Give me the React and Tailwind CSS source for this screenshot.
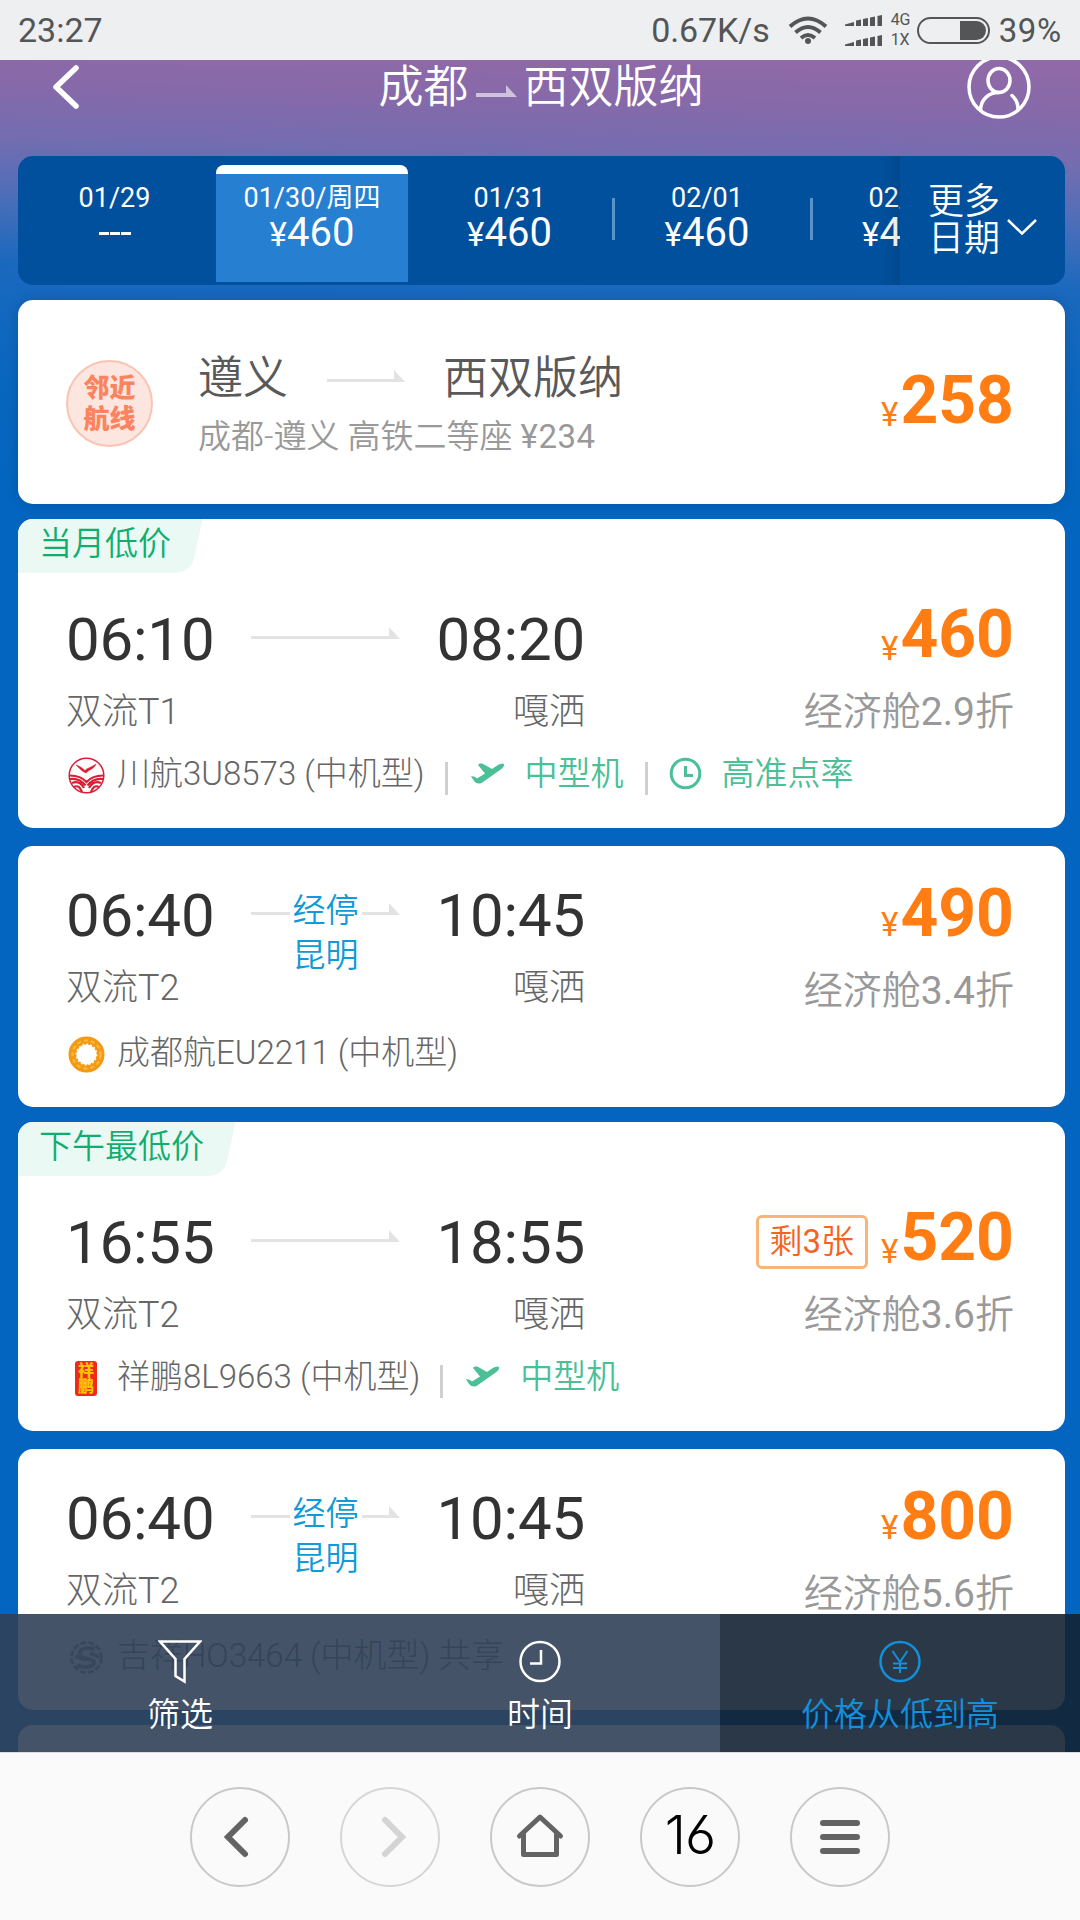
import React from 'react';

const dates = [
    { day: '01/29', price: null },
    { day: '01/30/周四', price: '460', active: true },
    { day: '01/31', price: '460', divider: true },
    { day: '02/01', price: '460', divider: true },
    { day: '02/02', price: '460' },
];

const flights = [
    {
        tag: '当月低价', tagWidth: 'w-[178px]', depart: '06:10', arrive: '08:20', from: '双流T1', to: '嘎洒',
        price: '460', discount: '2.9', logo: 'sichuan', airline: '川航3U8573 (中机型)', extras: ['plane', 'clock'],
    },
    {
        depart: '06:40', arrive: '10:45', from: '双流T2', to: '嘎洒', stop: '昆明',
        price: '490', discount: '3.4', logo: 'chengdu', airline: '成都航EU2211 (中机型)', extras: [],
    },
    {
        tag: '下午最低价', tagWidth: 'w-[211px]', depart: '16:55', arrive: '18:55', from: '双流T2', to: '嘎洒', left: 3,
        price: '520', discount: '3.6', logo: 'lucky', airline: '祥鹏8L9663 (中机型)', extras: ['plane'],
    },
    {
        depart: '06:40', arrive: '10:45', from: '双流T2', to: '嘎洒', stop: '昆明',
        price: '800', discount: '5.6', logo: 'juneyao', airline: '吉祥HO3464 (中机型) 共享', extras: [],
    },
];

const SignalBars = () => (
    <svg width="38" height="11" viewBox="0 0 38 11" fill="#545556">
        <path d="M0 11V9.500L9 7V11Z M11 11V5.500L16 4.500V11Z M18 11V4L23 3V11Z M25 11V2.500L30 1.500V11Z M32.500 11V1L37 0V11Z" />
    </svg>
);

const StatusBar = () => (
    <div className="flex h-[60px] shrink-0 items-center bg-[#edeff1] pl-[18px] pr-[18px] text-[34px] leading-none text-[#545556]">
        <span>23:27</span>
        <span className="ml-auto tracking-[-0.1px]">0.67K/s</span>
        <svg className="ml-[18px]" width="40" height="30" viewBox="0 0 40 30" fill="none" stroke="#545556" strokeWidth="4">
            <path d="M2 11.500Q20 -4.500 38 11.500M7.500 17.500Q20 6.500 32.500 17.500M13 23Q20 17 27 23" />
            <circle cx="20" cy="26" r="3" fill="#545556" stroke="none" />
        </svg>
        <div className="ml-[17px] flex flex-col gap-[9px]">
            <SignalBars />
            <SignalBars />
        </div>
        <div className="ml-[8px] flex w-[23px] flex-col gap-[4px] text-[16px] leading-[16px]">
            <span>4G</span>
            <span>1X</span>
        </div>
        <div className="ml-[3px] flex h-[27px] w-[73px] justify-end rounded-full border-2 border-[#545556] p-[2px]">
            <div className="w-[26px] rounded-r-full bg-[#545556]" />
        </div>
        <span className="ml-[9px] text-[33px] tracking-[0.7px]">39%</span>
    </div>
);

const Header = () => (
    <div className="flex h-[96px] shrink-0 items-start justify-between pl-[50px] pr-[48px]">
        <svg className="mt-[4px] w-[66px]" width="66" height="48" viewBox="0 0 66 48" fill="none" stroke="#fff" strokeWidth="5.500" strokeLinecap="round" strokeLinejoin="round">
            <path d="M26 4L6 23L26 42" />
        </svg>
        <div className="flex items-center pt-px text-[45px] font-[350] leading-[54px] text-white">
            <span>成都</span>
            <svg className="mx-[6px] mt-[3px]" width="43" height="14" viewBox="0 0 43 14" fill="#fff" fillOpacity="0.6">
                <path d="M1 10H31V2L42 14H1Z" />
            </svg>
            <span>西双版纳</span>
        </div>
        <svg className="-mt-[6px]" width="66" height="66" viewBox="0 0 66 66" fill="none" stroke="#fff" strokeWidth="3.500" strokeLinecap="round">
            <circle cx="33" cy="33" r="30" />
            <ellipse cx="33" cy="26.500" rx="11" ry="12" />
            <path d="M14.500 56C15 45 23 38.500 33 38.500M46 41.500C50 45 52 49.500 52 55" />
        </svg>
    </div>
);

const DateBar = () => (
    <div className="ml-[18px] mr-[15px] flex h-[129px] shrink-0 overflow-hidden rounded-[15px] bg-[#01509d] text-white">
        <div className="relative flex w-[882px] overflow-hidden pt-[9px]">
            {dates.map((item) => (
                <div key={item.day} className="flex w-[197.500px] shrink-0 items-start">
                    <div className={`flex h-[117px] w-[192px] shrink-0 flex-col items-center pl-px ${item.active ? 'rounded-t-[8px] border-t-[9px] border-white bg-[#267fd1]' : 'pt-[9px]'}`}>
                        <span className="mt-[9px] text-[27px] leading-[30px]">{item.day}</span>
                        {item.price ? (
                            <span className="mt-px flex items-baseline text-[40px] leading-[38px]">
                                <span className="text-[33px]">¥</span>
                                {item.price}
                            </span>
                        ) : (
                            <span className="mt-px flex h-[38px] items-center gap-px">
                                <i className="h-[3px] w-[10px] bg-white" />
                                <i className="h-[3px] w-[10px] bg-white" />
                                <i className="h-[3px] w-[10px] bg-white" />
                            </span>
                        )}
                    </div>
                    {item.divider && <div className="-mr-[8px] ml-[7px] mt-[33px] h-[42px] w-[3px] shrink-0 bg-[#5b93c9]" />}
                </div>
            ))}
            <div className="absolute inset-y-0 right-0 w-[20px] bg-gradient-to-r from-transparent to-black/10" />
        </div>
        <div className="flex items-center pl-[28px]">
            <div className="w-[72px] text-[36px] font-[350] leading-[37px]">更多日期</div>
            <svg className="ml-[6px] mt-[13px]" width="32" height="18" viewBox="0 0 32 18" fill="none" stroke="#fff" strokeWidth="2.500">
                <path d="M2 2L16 15.500L30 2" />
            </svg>
        </div>
    </div>
);

const Arrow = ({ width }) => (
    <svg width={width} height="12" viewBox={`0 0 ${width} 12`} fill="#e3e3e3">
        <path d={`M0 9H${width - 11}V0L${width} 12H0Z`} />
    </svg>
);

const Price = ({ value, low }) => (
    <div className="flex h-[66px] items-baseline leading-[66px] text-[#ff7d13]">
        <span className={`mr-[2px] text-[33px] ${low ? 'translate-y-[3px]' : ''}`}>¥</span>
        <span className="text-[66px] font-bold">{value}</span>
    </div>
);

const AirlineLogo = ({ name }) => {
    if (name === 'sichuan') {
        return (
            <svg width="37" height="37" viewBox="0 0 37 37" fill="none" stroke="#d81f35">
                <circle cx="18.500" cy="18.500" r="17.300" strokeWidth="1.500" />
                <path d="M8 8C12 9 14 11 17 13.500C19 11 24 10 28 7C26 12 22 12 18 16C15 15 12 12 8 8Z" fill="#d81f35" strokeWidth="0.500" />
                <path d="M2 18.500C9 18.500 14 20 18.500 25C23 20 28 18.500 35 18.500M2 22C9 21 14 24 17.500 28.500M35 22C28 21 23 24 19.500 28.500M4 26C9 24 13 26 16 31M33 26C28 24 24 26 21 31M6 30C10 28 12 30 14 35M31 30C27 28 25 30 23 35" strokeWidth="2.200" />
            </svg>
        );
    }
    if (name === 'chengdu') {
        return (
            <svg width="37" height="37" viewBox="0 0 37 37" fill="none">
                <circle cx="18.500" cy="18.500" r="14" stroke="#f39a12" strokeWidth="8" />
                <circle cx="18.500" cy="18.500" r="14" stroke="#f8b94c" strokeWidth="2" strokeDasharray="4 3" />
                <circle cx="18.500" cy="18.500" r="10.300" stroke="#fff" strokeWidth="1.200" strokeDasharray="2 2" />
            </svg>
        );
    }
    if (name === 'lucky') {
        return (
            <div className="flex h-[35px] w-[22px] flex-col items-center justify-center rounded-[3px] bg-[#ee2a1c] text-[16px] font-black leading-[16px] text-[#ffc400]">
                <span>祥</span>
                <span>鹏</span>
            </div>
        );
    }
    return (
        <svg width="37" height="37" viewBox="0 0 37 37" fill="none" stroke="#888" strokeWidth="4">
            <circle cx="18.500" cy="18.500" r="15" strokeWidth="3" strokeDasharray="6 2" />
            <path d="M27 10C17 7 10 11 12 16S27 19 26 24S14 29 9 26M7 17L17 21M22 14L31 18" />
        </svg>
    );
};

const Extra = ({ type }) => (
    <>
        <div className="mt-[8px] h-[33px] w-[3px] bg-[#cfcfcf]" />
        {type === 'plane' ? (
            <svg className="-mt-px ml-[23px] mr-[21px]" width="33" height="21" viewBox="0 0 33 21" fill="#4bbf95">
                <path d="M0 13.500C2 13 4 14 6 15.500L14 10.500C12 8 9 4.500 7 2C9 -0.500 12 0.500 14 2L21 6C25 3.500 28 0.500 32 0.500C34.500 2 32 5 29 7L12 19C9 21.500 5 20.500 3.500 18.500Z" />
            </svg>
        ) : (
            <svg className="-mt-px ml-[21px] mr-[20px]" width="33" height="33" viewBox="0 0 33 33" fill="none" stroke="#4bbf95" strokeWidth="3">
                <circle cx="16.500" cy="16.500" r="14.300" />
                <path d="M16.500 9V18.500H24" />
            </svg>
        )}
        <span className="mr-[21px] font-[350] text-[#4bbf95]">{type === 'plane' ? '中型机' : '高准点率'}</span>
    </>
);

const NearbyCard = () => (
    <div className="flex h-[204px] shrink-0 items-start rounded-[15px] bg-white pl-[48px] pr-[51px] shadow-[0_0_12px_rgba(0,0,0,0.15)]">
        <div className="mt-[60px] flex h-[87px] w-[87px] flex-col items-center justify-center rounded-full border-2 border-[#fbc3b3] bg-[#fde6df] text-[26px] font-black leading-[31px] text-[#fb845f]">
            <span>邻近</span>
            <span>航线</span>
        </div>
        <div className="ml-[45px] mt-[52px]">
            <div className="flex items-center text-[45px] font-[350] leading-[54px] text-[#595959]">
                <span>遵义</span>
                <div className="-mt-[7px] ml-[39px] mr-[38px]"><Arrow width={78} /></div>
                <span>西双版纳</span>
            </div>
            <div className="mt-[7px] text-[33px] font-[350] leading-[48px] text-[#999]">
                成都-遵义 高铁二等座 <span className="font-normal tracking-[0.5px]">¥234</span>
            </div>
        </div>
        <div className="ml-auto mt-[68px]"><Price value="258" low /></div>
    </div>
);

const FlightCard = ({ flight }) => (
    <div className={`relative flex shrink-0 flex-col overflow-hidden rounded-[15px] bg-white pl-[48px] pr-[51px] ${flight.tag ? 'h-[309px]' : 'h-[261px]'}`}>
        {flight.tag && (
            <div className={`absolute left-0 top-0 h-[54px] ${flight.tagWidth}`}>
                <div className="absolute inset-y-0 -left-4 right-[5px] origin-bottom -skew-x-12 rounded-br-[15px] bg-[#ebf9f5]" />
                <span className="relative pl-[21px] text-[33px] font-[350] leading-[50px] text-[#0fae6e]">{flight.tag}</span>
            </div>
        )}
        <div className="flex justify-between">
            <div className={`w-[519px] ${flight.tag ? 'pt-[91px]' : 'pt-[40px]'}`}>
                <div className="flex h-[60px] items-center justify-between text-[60px] leading-[60px] tracking-[-0.2px] text-[#333]">
                    <span>{flight.depart}</span>
                    <div className="relative -mt-[14px]">
                        <Arrow width={149} />
                        {flight.stop && (
                            <div className="absolute left-1/2 top-[-15px] w-[72px] -translate-x-1/2 text-center text-[33px] font-[350] leading-[45px] tracking-normal text-[#109ad7]">
                                <div className="bg-white">经停</div>
                                <div>{flight.stop}</div>
                            </div>
                        )}
                    </div>
                    <span>{flight.arrive}</span>
                </div>
                <div className="mt-[18px] flex justify-between text-[36px] font-light leading-[48px] text-[#666]">
                    <span>{flight.from}</span>
                    <span>{flight.to}</span>
                </div>
            </div>
            <div className={`flex flex-col items-end ${flight.tag ? 'pt-[83px]' : 'pt-[35px]'}`}>
                <div className="flex items-start">
                    {flight.left && (
                        <span className="mr-[13px] mt-[10px] h-[54px] rounded-[6px] border-[3px] border-[#f9b477] px-[11px] text-[33px] font-[350] leading-[48px] text-[#f5641e]">
                            剩<span className="font-normal">{flight.left}</span>张
                        </span>
                    )}
                    <Price value={flight.price} low={Boolean(flight.tag)} />
                </div>
                <div className="mt-[20px] text-[39px] font-[350] leading-[48px] text-[#999]">
                    经济舱<span className="font-normal">{flight.discount}</span>折
                </div>
            </div>
        </div>
        <div className="mt-[14px] flex h-[48px] items-center text-[33px] font-light leading-[48px] text-[#666]">
            <div className="mr-[11px] mt-[3px] flex w-[40px] justify-center"><AirlineLogo name={flight.logo} /></div>
            <span className="mr-[20px]">{flight.airline}</span>
            {flight.extras.map((type) => <Extra key={type} type={type} />)}
        </div>
    </div>
);

const SortBar = () => (
    <div className="absolute inset-x-0 bottom-0 grid h-[138px] grid-cols-3 text-[33px] font-[350] leading-[42px] text-white">
        <div className="flex flex-col items-center bg-[#304058]/90 pt-[25px]">
            <svg width="44" height="46" viewBox="0 0 44 46" fill="none" stroke="#fff" strokeWidth="2.500">
                <path d="M2 2.500H42L26.500 20V42.500L17.500 37V20Z" />
            </svg>
            <span className="mt-[9px]">筛选</span>
        </div>
        <div className="flex flex-col items-center bg-[#304058]/90 pt-[25px]">
            <svg width="44" height="46" viewBox="0 0 44 46" fill="none" stroke="#fff" strokeWidth="2.500">
                <circle cx="22" cy="22.500" r="19.500" />
                <path d="M23 11V24.500H12" />
            </svg>
            <span className="mt-[9px]">时间</span>
        </div>
        <div className="flex flex-col items-center bg-[#132233]/90 pt-[25px] text-[#138fdb]">
            <svg width="44" height="46" viewBox="0 0 44 46" fill="none" stroke="#138fdb" strokeWidth="2.500">
                <circle cx="22" cy="22.500" r="19.500" />
                <path d="M14.500 12L22 23L29.500 12M22 22V34M15 24.500H29M15 29H29" strokeWidth="2" />
            </svg>
            <span className="mt-[9px]">价格从低到高</span>
        </div>
    </div>
);

const NavButton = ({ children, faded }) => (
    <div className={`flex h-[100px] w-[100px] items-center justify-center rounded-full border-2 ${faded ? 'border-[#d6d6d6]' : 'border-[#c9c9c9]'}`}>
        {children}
    </div>
);

const BrowserBar = () => (
    <div className="flex h-[168px] shrink-0 items-start justify-center gap-[50px] border-t border-[#d9dde4] bg-[#fafafa] pt-[34px]">
        <NavButton>
            <svg width="50" height="50" viewBox="0 0 50 50" fill="none" stroke="#636363" strokeWidth="6" strokeLinecap="round">
                <path d="M30 8L13 25L30 42" />
            </svg>
        </NavButton>
        <NavButton faded>
            <svg width="50" height="50" viewBox="0 0 50 50" fill="none" stroke="#d4d4d4" strokeWidth="6" strokeLinecap="round">
                <path d="M20 8L37 25L20 42" />
            </svg>
        </NavButton>
        <NavButton>
            <svg width="50" height="50" viewBox="0 0 50 50" fill="none" stroke="#636363" strokeWidth="5" strokeLinecap="round" strokeLinejoin="round">
                <path d="M4.500 24L25 5L45.500 24M8.500 22V42.500H41.500V22" />
            </svg>
        </NavButton>
        <NavButton>
            <span className="-mt-[4px] font-[Inter] text-[54px] font-light leading-none tracking-[-1px] text-black [font-feature-settings:'ss01']">16</span>
        </NavButton>
        <NavButton>
            <div className="flex flex-col gap-[8px]">
                <div className="h-[6px] w-[40px] rounded-full bg-[#636363]" />
                <div className="h-[6px] w-[40px] rounded-full bg-[#636363]" />
                <div className="h-[6px] w-[40px] rounded-full bg-[#636363]" />
            </div>
        </NavButton>
    </div>
);

const App = () => {
    return (
        <div className="flex h-[1920px] w-[1080px] flex-col overflow-hidden font-[Roboto,'Noto_Sans_CJK_SC',sans-serif]">
            <StatusBar />
            <div className="relative flex min-h-0 flex-1 flex-col overflow-hidden bg-[linear-gradient(181.5deg,#9069a8_10px,#8769a9_50px,#746db0_105px,#4f6eb8_160px,#1a69be_230px,#0a66be_340px,#0365bf_450px)]">
                <Header />
                <DateBar />
                {/* Result list, runs on behind the sort bar */}
                <div className="ml-[18px] mr-[15px] mt-[15px] flex flex-col">
                    <NearbyCard />
                    {flights.map((flight, idx) => (
                        <div key={idx} className={flight.tag ? 'mt-[15px]' : 'mt-[18px]'}>
                            <FlightCard flight={flight} />
                        </div>
                    ))}
                    <div className="mt-[15px] h-[60px] rounded-t-[15px] bg-white" />
                </div>
                <SortBar />
            </div>
            <BrowserBar />
        </div>
    );
};

export default App;
